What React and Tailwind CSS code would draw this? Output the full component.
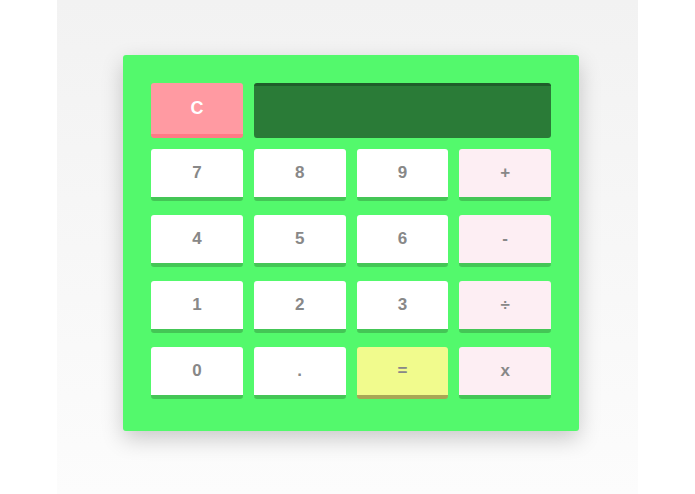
const KEYS = [
  { label: '7' }, { label: '8' }, { label: '9' }, { label: '+', kind: 'op' },
  { label: '4' }, { label: '5' }, { label: '6' }, { label: '-', kind: 'op' },
  { label: '1' }, { label: '2' }, { label: '3' }, { label: '÷', kind: 'op' },
  { label: '0' }, { label: '.' }, { label: '=', kind: 'eq' }, { label: 'x', kind: 'op' },
]

const STYLES = {
  num: 'bg-white border-[#44c656]',
  op: 'bg-[#fdeef3] border-[#44c656]',
  eq: 'bg-[#f1fb8d] border-[#a9a655]',
}

function Key({ label, kind = 'num' }) {
  return (
    <button className={`h-[52px] rounded-[3px] border-b-4 text-[17px] font-bold text-[#888888] flex items-center justify-center ${STYLES[kind]}`}>
      {label}
    </button>
  )
}

export default function App() {
  return (
    <div className="min-h-screen bg-white flex pl-[57px]" style={{ fontFamily: '"Liberation Sans", Arial, sans-serif' }}>
      <div className="w-[581px] min-h-[494px] bg-gradient-to-b from-[#f2f2f2] to-[#fcfcfc] pt-[55px] pl-[66px]">
        <div className="w-[456px] h-[376px] bg-[#53f96c] rounded-[3px] shadow-[0_8px_22px_rgba(0,0,0,0.2)] px-[28px] pt-[28px]">
          {/* top row: clear + display */}
          <div className="flex gap-[11px] mb-[11px]">
            <button className="w-[92px] h-[55px] rounded-[3px] bg-[#ff9aa2] border-b-4 border-[#ff7a86] text-white text-[18px] font-bold flex items-center justify-center">
              C
            </button>
            <div className="flex-1 h-[55px] rounded-[3px] bg-[#2a7b37] border-t-[3px] border-[#1f5d2a]" />
          </div>
          {/* keys */}
          <div className="grid grid-cols-4 gap-x-[11px] gap-y-[14px]">
            {KEYS.map(k => <Key key={k.label} {...k} />)}
          </div>
        </div>
      </div>
    </div>
  )
}
